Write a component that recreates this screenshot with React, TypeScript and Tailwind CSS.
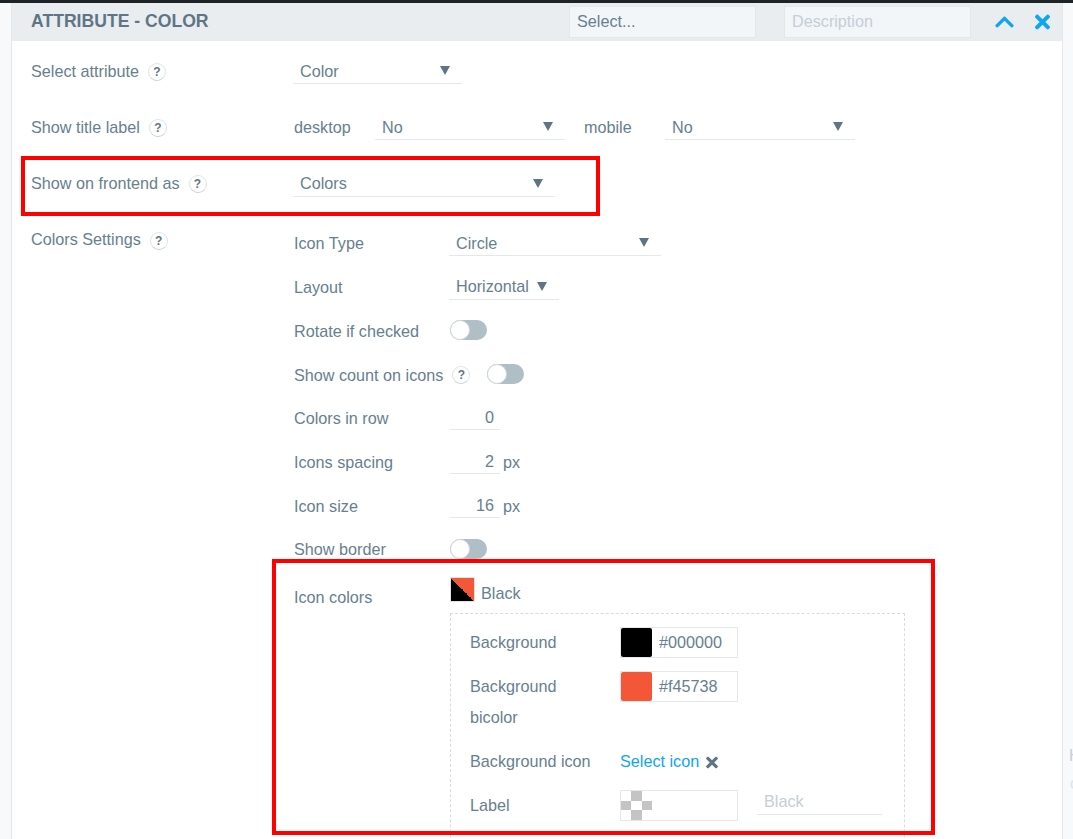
import { FaChevronUp, FaTimes } from "react-icons/fa";

function Help({ className = "" }: { className?: string }) {
  return (
    <span
      className={`inline-flex h-[18px] w-[18px] items-center justify-center rounded-full border border-[#dde3e7] border-b-[#c9d2d8] text-[12px] font-bold leading-none text-[#5f7585] ${className}`}
    >
      ?
    </span>
  );
}

function Caret({ className = "" }: { className?: string }) {
  return (
    <svg viewBox="0 0 10 9" className={`h-[9px] w-[10px] ${className}`}>
      <path d="M0 0h10L5 9z" fill="#5f7585" />
    </svg>
  );
}

function Select({ value, width }: { value: string; width: string }) {
  return (
    <div className={`flex h-[26px] items-center justify-between border-b border-[#e3e8eb] pl-[7px] pr-[12px] ${width}`}>
      <span className="mt-[1px]">{value}</span>
      <Caret />
    </div>
  );
}

function Toggle() {
  return (
    <span className="flex h-5 w-[37px] items-center rounded-full bg-[#b0bec5]">
      <span className="h-5 w-5 rounded-full border border-[#cfd8dc] bg-white" />
    </span>
  );
}

function Row({ label, help, height, children }: { label: string; help?: boolean; height: string; children: React.ReactNode }) {
  return (
    <div className={`flex items-center ${height}`}>
      <div className="flex w-[262px] shrink-0 items-center gap-[9px]">
        <span>{label}</span>
        {help && <Help className="mt-[2px]" />}
      </div>
      {children}
    </div>
  );
}

function SubRow({ label, children }: { label: string; children: React.ReactNode }) {
  return (
    <div className="flex h-[43.75px] items-center">
      <span className="mt-[1px] w-[156px] shrink-0">{label}</span>
      {children}
    </div>
  );
}

function NumberField({ value, unit }: { value: string; unit?: string }) {
  return (
    <div className="flex items-center gap-[3px]">
      <span className="flex h-[25px] w-[50px] items-center justify-end border-b border-[#e3e8eb] pr-[6px]">{value}</span>
      {unit && <span className="mt-[2px]">{unit}</span>}
    </div>
  );
}

function ColorField({ color, value }: { color: string; value: string }) {
  return (
    <div className="flex h-[31px] w-[118px] items-center border border-[#e3e8eb]">
      <span className="h-[29px] w-[31px] rounded-[2px]" style={{ background: color }} />
      <span className="pl-[7px]">{value}</span>
    </div>
  );
}

function Checker() {
  const cells = [0, 1, 0, 1, 0, 1, 0, 1, 0];
  return (
    <div className="grid h-[29px] w-[31px] grid-cols-3 grid-rows-3">
      {cells.map((on, i) => (
        <span key={i} className={on ? "bg-[#c4c4c4]" : "bg-white"} />
      ))}
    </div>
  );
}

export default function App() {
  return (
    <div
      className="relative h-[839px] overflow-hidden bg-[#f7f9fb] text-[16.2px] text-[#67808f]"
      style={{ fontFamily: '"Liberation Sans", Arial, sans-serif' }}
    >
      <div className="h-[3px] bg-[#1d2327]" />
      <div className="ml-[11px] mr-[10px] h-[836px] border-x border-[#e3e8eb] bg-white">
        <div className="flex h-[38px] items-center bg-[#e9edf0] pl-[19px]">
          <h2 className="-mt-[2px] w-[538px] text-[17.6px] font-bold uppercase text-[#5f7585]">Attribute - Color</h2>
          <div className="flex h-[32px] w-[187px] items-center border border-[#e3e8eb] bg-[#f2f6f9] px-[7px] pb-[2px]">Select...</div>
          <div className="ml-[28px] flex h-[32px] w-[187px] items-center border border-[#e3e8eb] bg-[#f2f6f9] px-[7px] pb-[2px] text-[#c5ced6]">Description</div>
          <FaChevronUp className="ml-[24px] h-[22px] w-[19px] text-[#0ea5f5]" />
          <FaTimes className="ml-[21px] h-[22px] w-[15px] text-[#0ea5f5]" />
        </div>

        <div className="pl-[19px] pt-[2px]">
          <Row label="Select attribute" help height="h-[56px]">
            <Select value="Color" width="w-[169px]" />
          </Row>
          <Row label="Show title label" help height="h-[56px]">
            <span className="ml-[1px] w-[81px]">desktop</span>
            <Select value="No" width="w-[190px]" />
            <span className="ml-[19px] w-[81px]">mobile</span>
            <Select value="No" width="w-[190px]" />
          </Row>
          <Row label="Show on frontend as" help height="h-[57px]">
            <Select value="Colors" width="w-[262px]" />
          </Row>

          <div className="flex">
            <div className="flex h-[56px] w-[263px] shrink-0 items-center gap-[9px] self-start">
              <span className="-mt-[1px]">Colors Settings</span>
              <Help className="mt-[2px]" />
            </div>
            <div className="min-w-0 flex-1 pt-[9px]">
              <SubRow label="Icon Type">
                <Select value="Circle" width="w-[212px] -ml-[1px]" />
              </SubRow>
              <SubRow label="Layout">
                <Select value="Horizontal" width="w-[110px] -ml-[1px]" />
              </SubRow>
              <SubRow label="Rotate if checked">
                <Toggle />
              </SubRow>
              <div className="flex h-[43.75px] items-center">
                <span className="mt-[2px]">Show count on icons</span>
                <Help className="ml-[9px] mt-[2px]" />
                <span className="ml-[17px]">
                  <Toggle />
                </span>
              </div>
              <SubRow label="Colors in row">
                <NumberField value="0" />
              </SubRow>
              <SubRow label="Icons spacing">
                <NumberField value="2" unit="px" />
              </SubRow>
              <SubRow label="Icon size">
                <NumberField value="16" unit="px" />
              </SubRow>
              <SubRow label="Show border">
                <Toggle />
              </SubRow>

              <div className="mt-[6px] flex">
                <span className="w-[156px] shrink-0 pt-[8px]">Icon colors</span>
                <div className="w-[455px]">
                  <div className="flex h-[36px] items-start gap-[6px]">
                    <span className="h-[25px] w-[25px] border border-[#dde3e7] bg-[linear-gradient(to_top_right,#000_50%,#f45738_50%)]" />
                    <span className="mt-[4px]">Black</span>
                  </div>
                  <div className="h-[300px] border border-dashed border-[#d5dde2] pl-[19px] pt-[13px]">
                    <div className="flex h-[44px] items-start">
                      <span className="w-[150px] pt-[3px]">Background</span>
                      <ColorField color="#000000" value="#000000" />
                    </div>
                    <div className="flex h-[69px] items-start">
                      <span className="w-[150px] pr-[30px] leading-[31px]">Background bicolor</span>
                      <ColorField color="#f45738" value="#f45738" />
                    </div>
                    <div className="flex h-[44px] items-center">
                      <span className="mb-[2px] w-[150px]">Background icon</span>
                      <span className="mb-[2px] text-[#0ea5f5]">Select icon</span>
                      <FaTimes className="ml-[7px] h-[17px] w-[12px] text-[#5f7585]" />
                    </div>
                    <div className="flex items-start pt-[6px]">
                      <span className="w-[150px] pt-[3px]">Label</span>
                      <div className="flex h-[31px] w-[118px] border border-[#e3e8eb]">
                        <Checker />
                      </div>
                      <span className="ml-[19px] h-[25px] w-[125px] border-b border-[#e3e8eb] pl-[7px] leading-[22px] text-[#c5ced6]">Black</span>
                    </div>
                  </div>
                </div>
              </div>
            </div>
          </div>
        </div>
      </div>

      {/* annotation boxes drawn over the screenshot */}
      <div className="absolute left-[21px] top-[156px] h-[60px] w-[579px] border-4 border-[#ff0000]" />
      <div className="absolute left-[272px] top-[559px] h-[276px] w-[663px] border-4 border-[#ff0000]" />
      <span className="absolute left-[1069px] top-[744px] text-[16px] text-[#c9ced2]">H</span>
      <span className="absolute left-[1070px] top-[772px] text-[16px] text-[#dfe3e6]">c</span>
    </div>
  );
}
